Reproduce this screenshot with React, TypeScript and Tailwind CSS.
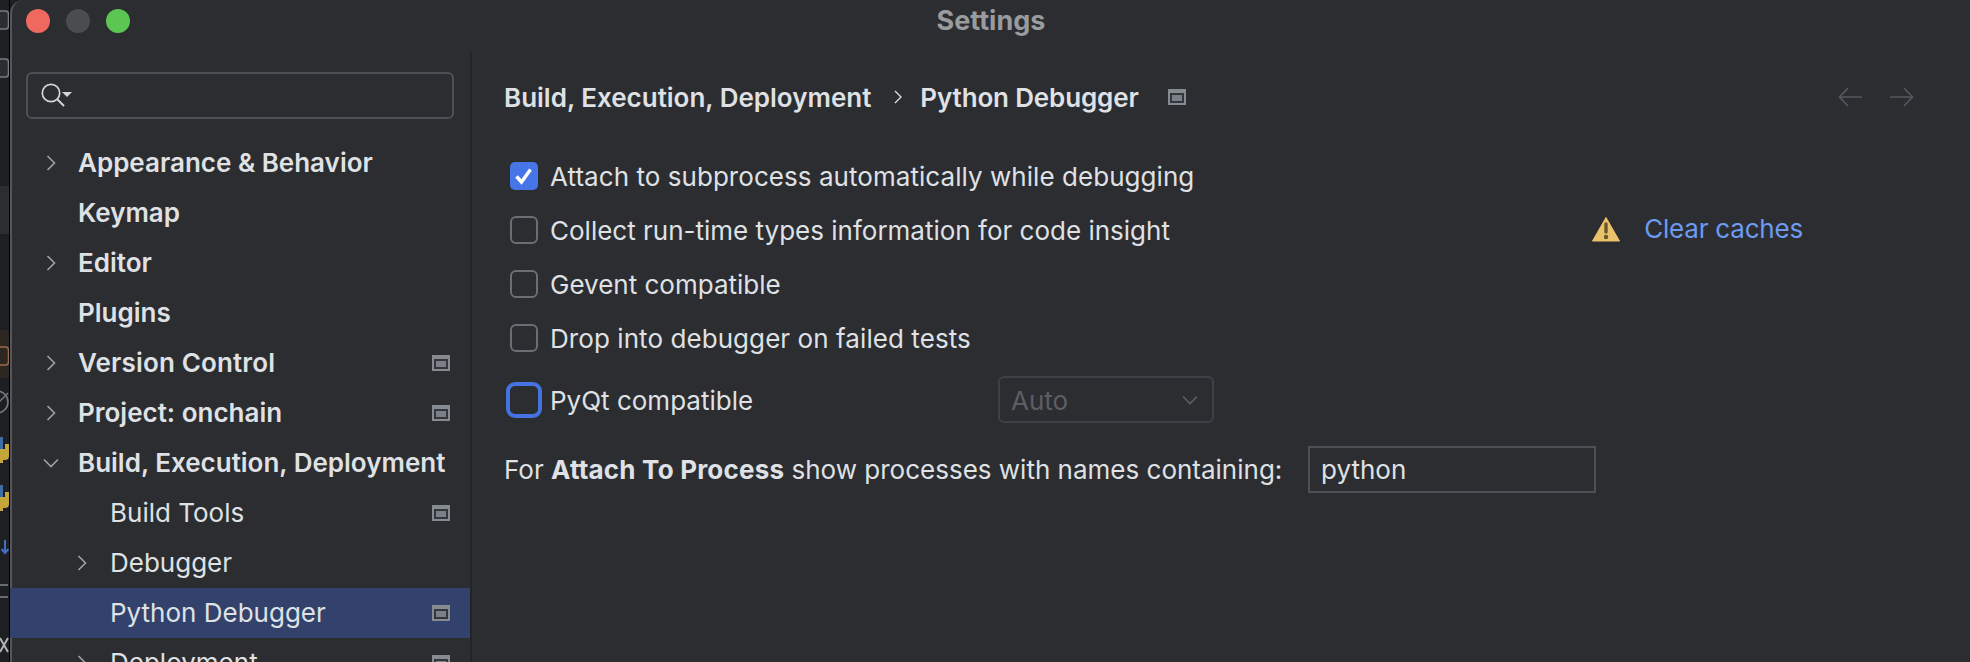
import * as React from "react";

const tree = [
  { label: "Appearance & Behavior", level: 0, bold: true, arrow: "right" },
  { label: "Keymap", level: 0, bold: true },
  { label: "Editor", level: 0, bold: true, arrow: "right" },
  { label: "Plugins", level: 0, bold: true },
  { label: "Version Control", level: 0, bold: true, arrow: "right", scoped: true, tight: "tracking-[0.15px]" },
  { label: "Project: onchain", level: 0, bold: true, arrow: "right", scoped: true },
  { label: "Build, Execution, Deployment", level: 0, bold: true, arrow: "down" },
  { label: "Build Tools", level: 1, scoped: true },
  { label: "Debugger", level: 1, arrow: "right" },
  { label: "Python Debugger", level: 1, scoped: true, active: true },
  { label: "Deployment", level: 1, arrow: "right", scoped: true },
];

function ChevronRight({ className = "" }: { className?: string }) {
  return (
    <svg width="10" height="16" viewBox="0 0 10 16" fill="none" className={className}>
      <path d="M1.5 1 L8.5 8 L1.5 15" stroke="currentColor" strokeWidth="1.6" />
    </svg>
  );
}

function ChevronDown({ className = "" }: { className?: string }) {
  return (
    <svg width="16" height="10" viewBox="0 0 16 10" fill="none" className={className}>
      <path d="M1 1.5 L8 8.5 L15 1.5" stroke="currentColor" strokeWidth="1.6" />
    </svg>
  );
}

function ScopeIcon() {
  return (
    <svg width="18" height="16" viewBox="0 0 18 16" className="shrink-0">
      <rect width="18" height="16" fill="#868a91" />
      <rect x="2" y="4" width="14" height="10" fill="#34363b" />
      <rect x="4" y="6" width="10" height="6" fill="#7b7f87" />
    </svg>
  );
}

function Arrow({ flip = false }: { flip?: boolean }) {
  return (
    <svg width="24" height="20" viewBox="0 0 24 20" fill="none" className={flip ? "rotate-180" : ""}>
      <path d="M24 10 H1.5 M10 1 L1.5 10 L10 19" stroke="#55575c" strokeWidth="1.7" />
    </svg>
  );
}

// sliver of the IDE window behind the dialog
function BackgroundStrip() {
  return (
    <svg width="10" height="662" viewBox="0 0 10 662" className="shrink-0 block">
      <rect width="10" height="662" fill="#1e1f22" />
      <rect x="0" y="186" width="9" height="48" fill="#2b2d30" />
      <rect x="0" y="330" width="9" height="48" fill="#2e2620" />
      <rect x="-4" y="11" width="12.5" height="18" rx="3" fill="#2b2d30" stroke="#7a7c81" strokeWidth="1.5" />
      <rect x="-4" y="59" width="12.5" height="18" rx="3" fill="#2b2d30" stroke="#7a7c81" strokeWidth="1.5" />
      <rect x="-4" y="347" width="12.5" height="18" rx="3" fill="none" stroke="#9a6a4a" strokeWidth="1.5" />
      <circle cx="-3" cy="402" r="11" fill="none" stroke="#77797e" strokeWidth="1.6" />
      <path d="M-3 404 L8 393" stroke="#77797e" strokeWidth="1.4" />
      <path d="M-2 437 H3 V449 H-2 Z" fill="#3d6fa5" />
      <path d="M-2 449 H5 V444 H9 V456 Q9 460 5 460 H3 V463 H-2 Z" fill="#c4a63c" />
      <path d="M-2 485 H3 V497 H-2 Z" fill="#3d6fa5" />
      <path d="M-2 497 H5 V492 H9 V504 Q9 508 5 508 H3 V511 H-2 Z" fill="#c4a63c" />
      <path d="M5 540 V553 M1.5 549 L5 553 L8.5 549" stroke="#4470c4" strokeWidth="2" fill="none" />
      <path d="M0 585 H8 M0 597 H8" stroke="#84868a" strokeWidth="1.4" />
      <path d="M0 638 L8 652 M8 638 L0 652" stroke="#b0b2b5" strokeWidth="2" />
      <rect x="9" y="0" width="1" height="662" fill="#000000" />
    </svg>
  );
}

function Sidebar() {
  return (
    <aside className="w-[460px] shrink-0 border-r-2 border-[#232427]">
      <div className="mt-[20px] ml-[14px] w-[428px] h-[47px] border-2 border-[#4e5056] rounded-[6px] flex items-center pl-[12px]">
        <svg width="34" height="26" viewBox="0 0 34 26" fill="none">
          <circle cx="11" cy="10" r="8.7" stroke="#d3d5d9" strokeWidth="1.7" />
          <path d="M17 16 L24 23" stroke="#d3d5d9" strokeWidth="1.9" />
          <path d="M22 9 H32 L27 14 Z" fill="#d3d5d9" />
        </svg>
      </div>
      <div className="mt-[19px]">
        {tree.map((item) => (
          <div
            key={item.label}
            className={
              "h-[50px] flex items-center pr-[20px] " +
              (item.active ? "bg-[#32426c] -ml-[2px] pl-[2px]" : "")
            }
          >
            <div className={item.level === 1 ? "w-[99px] flex items-center justify-end shrink-0 pr-[24px] text-[#9fa2a8]" : "w-[66px] flex items-center justify-end shrink-0 pr-[22px] text-[#9fa2a8]"}>
              {item.arrow === "right" && <ChevronRight />}
              {item.arrow === "down" && <ChevronDown className="-mr-[3px]" />}
            </div>
            <span className={"pb-[2px] text-[26px] text-[#dfe1e5] whitespace-nowrap " + (item.bold ? "font-semibold " : "font-normal -ml-[1px] ") + (item.tight ?? "")}>
              {item.label}
            </span>
            {item.scoped && (
              <div className="ml-auto">
                <ScopeIcon />
              </div>
            )}
          </div>
        ))}
      </div>
    </aside>
  );
}

function Checkbox({ checked = false, focused = false }: { checked?: boolean; focused?: boolean }) {
  if (checked) {
    return (
      <div className="w-[28px] h-[28px] rounded-[5px] bg-[#4775e8] flex items-center justify-center shrink-0">
        <svg width="18" height="18" viewBox="0 0 18 18" fill="none">
          <path d="M1.5 9.5 L6.5 15 L15.5 2.5" stroke="#ffffff" strokeWidth="3.4" />
        </svg>
      </div>
    );
  }
  if (focused) {
    return <div className="w-[28px] h-[28px] rounded-[5px] outline-4 outline-[#4472e0] shrink-0" />;
  }
  return <div className="w-[28px] h-[28px] rounded-[6px] border-2 border-[#6c6e73] shrink-0" />;
}

function SettingsPanel() {
  return (
    <main className="flex-1 pl-[32px]">
      <header className="h-[90px] flex items-center text-[#dfe1e5] text-[26px] font-semibold">
        <span>Build, Execution, Deployment</span>
        <svg width="8" height="14" viewBox="0 0 8 14" fill="none" className="ml-[23px] mr-[18px]">
          <path d="M1 1 L7 7 L1 13" stroke="#dfe1e5" strokeWidth="1.3" />
        </svg>
        <span className="tracking-[-0.15px]">Python Debugger</span>
        <div className="ml-[29px]">
          <ScopeIcon />
        </div>
        <div className="ml-auto mr-[56px] flex gap-[28px]">
          <Arrow />
          <Arrow flip />
        </div>
      </header>

      <div className="mt-[7px] pl-[6px] flex flex-col text-[26px] text-[#dfe1e5]">
        <label className="h-[54px] flex items-center gap-[12px]">
          <Checkbox checked />
          <span className="tracking-[0.05px]">Attach to subprocess automatically while debugging</span>
        </label>
        <label className="h-[54px] flex items-center gap-[12px]">
          <Checkbox />
          <span>Collect run-time types information for code insight</span>
          <div className="ml-auto mr-[167px] mb-[3px] flex items-center gap-[24px]">
            <svg width="28" height="26" viewBox="0 0 28 26">
              <path d="M14 1.5 L27.5 25 H0.5 Z" fill="#eac26b" stroke="#eac26b" strokeLinejoin="round" />
              <path d="M14 8 V16" stroke="#66572f" strokeWidth="3.4" strokeLinecap="round" />
              <circle cx="14" cy="21" r="2.2" fill="#66572f" />
            </svg>
            <span className="text-[#6c9bef] tracking-[-0.2px]">Clear caches</span>
          </div>
        </label>
        <label className="h-[54px] flex items-center gap-[12px]">
          <Checkbox />
          <span>Gevent compatible</span>
        </label>
        <label className="h-[54px] flex items-center gap-[12px]">
          <Checkbox />
          <span className="tracking-[0.07px]">Drop into debugger on failed tests</span>
        </label>
        <div className="mt-[11px] h-[47px] flex items-center gap-[12px]">
          <Checkbox focused />
          <span className="w-[436px] pt-[2px]">PyQt compatible</span>
          <div className="w-[216px] h-[47px] border-2 border-[#3f4146] rounded-[6px] flex items-center justify-between pl-[11px] pr-[14px] text-[#5c5e64]">
            <span className="pt-[2px]">Auto</span>
            <ChevronDown className="text-[#5c5e64]" />
          </div>
        </div>
        <div className="-ml-[6px] mt-[23px] flex items-center">
          <span className="w-[804px]">
            For <b className="font-bold tracking-[0.2px]">Attach To Process</b> show processes with names containing:
          </span>
          <div className="w-[288px] h-[47px] border-2 border-[#4e5056] flex items-center pl-[11px]">python</div>
        </div>
      </div>
    </main>
  );
}

export default function App() {
  return (
    <div className="w-[1970px] h-[662px] flex overflow-hidden bg-[#1e1f22] font-[Inter,sans-serif]">
      <BackgroundStrip />
      <div className="flex-1 flex flex-col bg-[#2c2d31] border-l-2 border-[#54565b] rounded-tl-[14px]">
        <div className="h-[52px] shrink-0 grid grid-cols-3 pb-[10px]">
          <div className="flex items-center gap-[16px] pl-[14px]">
            <div className="w-[24px] h-[24px] rounded-full bg-[#f0695e]" />
            <div className="w-[24px] h-[24px] rounded-full bg-[#4b4c4f]" />
            <div className="w-[24px] h-[24px] rounded-full bg-[#5cc653]" />
          </div>
          <div className="flex items-center justify-center text-[27px] font-bold text-[#9a9b9e]">Settings</div>
        </div>
        <div className="flex-1 flex min-h-0">
          <Sidebar />
          <SettingsPanel />
        </div>
      </div>
    </div>
  );
}
